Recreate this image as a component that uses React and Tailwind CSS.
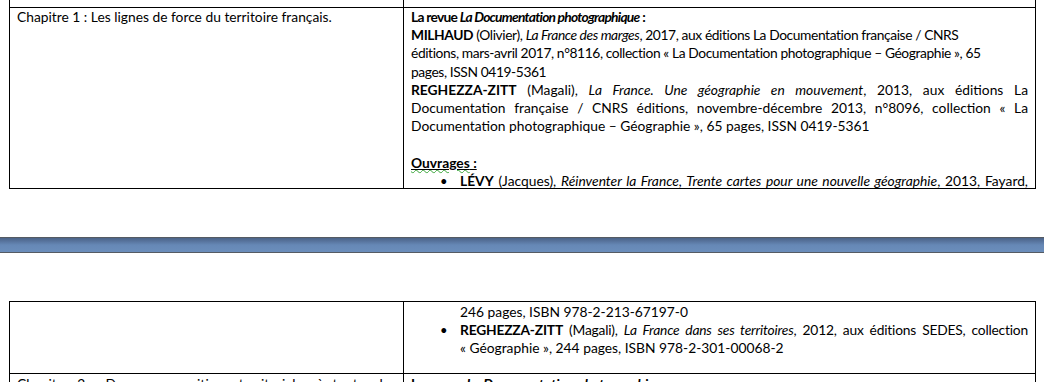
import React from "react";

const font = { fontFamily: "Lato, 'Liberation Sans', sans-serif" };

function Line({ justify, indent, bullet, className = "", children }) {
  return (
    <div className={`relative h-[18.2px] whitespace-nowrap ${indent ? "pl-[49px]" : ""} ${justify ? "text-justify [text-align-last:justify]" : ""} ${className}`}>
      {bullet && <span className="absolute left-[29px] top-0 text-[13px] tracking-normal">•</span>}
      {children}
    </div>
  );
}

function Row({ className = "", left, right }) {
  return (
    <div className={`grid grid-cols-[394px_1fr] ${className}`}>
      <div className="border-r border-black pl-[7px] pr-[7px] overflow-hidden">{left}</div>
      <div className="pl-[7px] pr-[7px] overflow-hidden">{right}</div>
    </div>
  );
}

export default function App() {
  return (
    <div className="w-[1044px] h-[382px] overflow-hidden bg-white text-black text-[13.8px] leading-[18.2px]" style={font}>
      {/* bottom of first page */}
      <div className="ml-[9px] w-[1027px] border-x border-black">
        <Row className="h-[8px] border-b border-black" />
        <Row
          className="h-[181px] border-b border-black"
          left={<Line>Chapitre 1 : Les lignes de force du territoire français.</Line>}
          right={
            <div>
              <Line className="tracking-[-0.75px]">
                <b>La revue <i>La Documentation photographique</i> :</b>
              </Line>
              <Line className="tracking-[-0.4px]">
                <b>MILHAUD</b> (Olivier), <i>La France des marges</i>, 2017, aux éditions La Documentation française / CNRS
              </Line>
              <Line className="tracking-[-0.4px]">
                éditions, mars-avril 2017, n°8116, collection « La Documentation photographique – Géographie », 65
              </Line>
              <Line className="tracking-[-0.4px]">pages, ISSN 0419-5361</Line>
              <Line justify>
                <b>REGHEZZA-ZITT</b> (Magali), <i>La France. Une géographie en mouvement</i>, 2013, aux éditions La
              </Line>
              <Line justify>Documentation française / CNRS éditions, novembre-décembre 2013, n°8096, collection « La</Line>
              <Line>Documentation photographique – Géographie », 65 pages, ISSN 0419-5361</Line>
              <Line />
              <Line>
                <b>
                  <span className="underline decoration-wavy decoration-[#3aa53a] decoration-1 underline-offset-[1px]">
                    <span className="underline decoration-black decoration-1 underline-offset-[1px]">Ouvrages</span>
                  </span>
                  <span className="underline decoration-black decoration-1 underline-offset-[1px]"> :</span>
                </b>
              </Line>
              <Line justify indent bullet>
                <b>LÉVY</b> (Jacques), <i>Réinventer la France, Trente cartes pour une nouvelle géographie</i>, 2013, Fayard,
              </Line>
            </div>
          }
        />
      </div>

      {/* page separator */}
      <div className="mt-[48px] h-[16px] border-t border-b border-[#555b63] bg-linear-to-b from-[#4b6388] via-[#6688b6] to-[#6b8ebb]" />

      {/* top of next page */}
      <div className="mt-[48px] ml-[9px] w-[1027px] border-x border-t border-black">
        <Row
          className="h-[72px] border-b border-black"
          right={
            <div className="pt-[1px]">
              <Line indent>246 pages, ISBN 978-2-213-67197-0</Line>
              <Line justify indent bullet className="tracking-[-0.2px]">
                <b>REGHEZZA-ZITT</b> (Magali), <i>La France dans ses territoires</i>, 2012, aux éditions SEDES, collection
              </Line>
              <Line indent>« Géographie », 244 pages, ISBN 978-2-301-00068-2</Line>
            </div>
          }
        />
        <Row
          className="h-[40px]"
          left={
            <div className="pt-[1px]">
              <Line justify>Chapitre 2 : Des recompositions territoriales à toutes les</Line>
            </div>
          }
          right={
            <div className="pt-[1px]">
              <Line>
                <b>La revue <i>La Documentation photographique</i> :</b>
              </Line>
            </div>
          }
        />
      </div>
    </div>
  );
}
